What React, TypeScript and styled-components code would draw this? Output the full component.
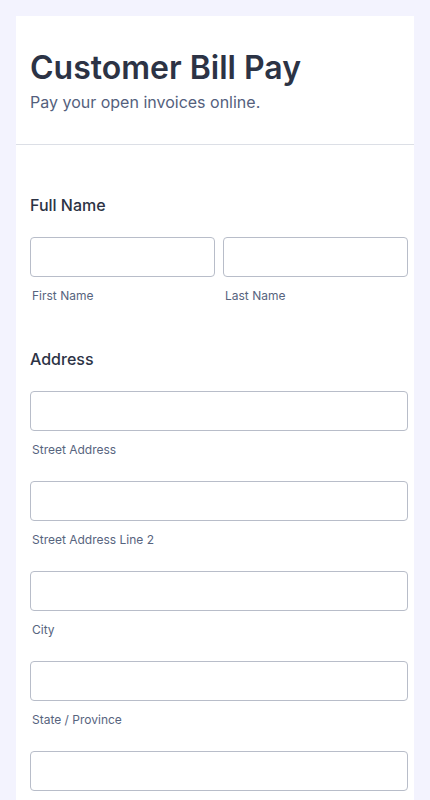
import styled, { createGlobalStyle } from 'styled-components'

const GlobalStyle = createGlobalStyle`
  * {
    box-sizing: border-box;
  }

  body {
    margin: 0;
    background-color: #f3f3fe;
    font-family: 'Inter', 'Noto Sans', sans-serif;
    color: #2c3345;
  }
`

const Page = styled.div`
  padding: 16px 16px 0 16px;
  min-height: 800px;
`

const Card = styled.form`
  background-color: #ffffff;
  min-height: 784px;
`

const Header = styled.header`
  padding: 33px 14px 30px 14px;
  border-bottom: 1px solid #dcdfe6;
`

const Title = styled.h1`
  margin: 0;
  font-size: 32px;
  line-height: 1.2;
  font-weight: 600;
  color: #2c3345;
`

const Subtitle = styled.p`
  margin: 3px 0 0 0;
  font-size: 16px;
  line-height: 1.5;
  color: #545f7d;
`

const Body = styled.div`
  padding: 48px 6px 0 14px;
`

const Section = styled.section`
  margin-bottom: 42px;
`

const SectionLabel = styled.h2`
  margin: 0 0 20px 0;
  font-size: 16px;
  line-height: 1.5;
  font-weight: 500;
  color: #2c3345;
`

const Row = styled.div`
  display: grid;
  grid-template-columns: 1fr 1fr;
  gap: 8px;
`

const Stack = styled.div`
  display: flex;
  flex-direction: column;
  gap: 22px;
`

const Field = styled.label`
  display: flex;
  flex-direction: column;
  gap: 10px;
`

const Input = styled.input`
  width: 100%;
  height: 40px;
  padding: 0 10px;
  border: 1px solid #b8bdc9;
  border-radius: 4px;
  background-color: #ffffff;
  font-family: inherit;
  font-size: 15px;
  color: #2c3345;
  outline: none;
`

const Sublabel = styled.span`
  padding-left: 2px;
  font-size: 12px;
  line-height: 1.5;
  color: #57647e;
`

const SubField = ({ label }: { label: string }) => (
  <Field>
    <Input type='text' />
    <Sublabel>{label}</Sublabel>
  </Field>
)

const App = () => {
  return (
    <>
      <GlobalStyle />
      <Page>
        <Card onSubmit={(e) => e.preventDefault()}>
          <Header>
            <Title>Customer Bill Pay</Title>
            <Subtitle>Pay your open invoices online.</Subtitle>
          </Header>
          <Body>
            <Section>
              <SectionLabel>Full Name</SectionLabel>
              <Row>
                <SubField label='First Name' />
                <SubField label='Last Name' />
              </Row>
            </Section>
            <Section>
              <SectionLabel>Address</SectionLabel>
              <Stack>
                <SubField label='Street Address' />
                <SubField label='Street Address Line 2' />
                <SubField label='City' />
                <SubField label='State / Province' />
                <SubField label='Postal / Zip Code' />
              </Stack>
            </Section>
          </Body>
        </Card>
      </Page>
    </>
  )
}

export default App
